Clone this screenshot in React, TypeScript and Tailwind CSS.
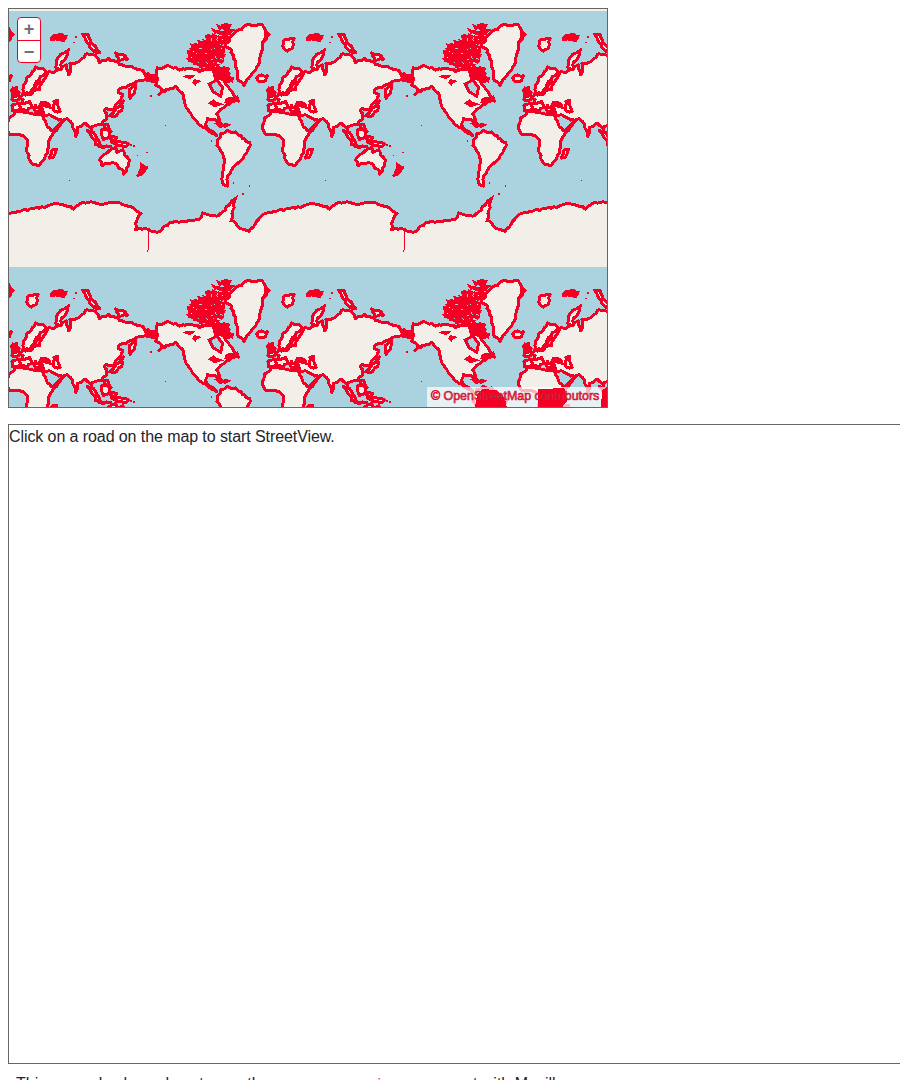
const RED = "#f50025";
const LAND = "#f2efe9";
const WATER = "#aad3df";

// coordinates are 3x screen pixels, one world is 768 wide
const landPaths = [
  // africa
  "19 385 28 355 48 338 75 335 100 342 128 345 136 365 148 385 161 392 189 362 164 395 150 410 144 425 146 448 135 468 124 490 109 498 94 492 86 465 80 440 84 425 74 407 50 404 29 405",
  // eurasia
  "36 332 35 316 50 311 62 312 72 300 60 290 68 283 85 285 102 275 116 268 124 250 136 232 148 216 165 214 180 205 197 196 208 222 214 200 207 190 235 186 250 172 262 160 284 165 300 186 322 178 345 182 365 195 385 203 410 205 430 210 440 238 410 246 388 256 365 266 352 278 366 285 362 302 340 325 312 328 322 352 306 372 285 376 272 385 255 370 235 382 228 406 216 372 204 356 190 364 160 351 150 342 132 346 125 325 105 322 85 318 68 320 55 335",
  // scandinavia
  "66 270 72 252 82 232 95 215 106 203 128 202 142 218 120 232 108 245 104 262 90 278 74 282",
  // kamchatka, japan
  "386 282 390 262 408 250 406 274 392 294",
  "330 346 345 332 358 320 368 302 364 330 346 348 332 350",
  // australia
  "300 478 312 465 330 452 345 442 352 455 368 448 385 478 386 498 372 520 362 508 345 490 325 488 305 497",
  // madagascar
  "160 446 167 450 160 472 150 476 152 460",
  // north america
  "470 206 500 198 530 206 558 210 576 204 600 214 625 206 655 222 668 232 690 268 716 302 692 306 670 322 650 342 654 352 660 375 648 358 622 354 618 375 630 392 650 408 625 392 602 378 578 350 558 322 552 286 526 260 500 268 476 282 488 265 470 255 472 236",
  // south america
  "652 420 662 402 682 394 705 398 722 408 754 434 745 452 722 482 695 508 685 530 680 558 668 554 668 520 672 480 668 462 652 435",
  // greenland
  "675 138 700 100 740 76 785 74 805 102 786 138 780 185 765 210 732 254 716 240 708 190 692 150",
  // iceland
  "772 232 786 224 802 230 796 241 778 242",
  // novaya zemlya and other russian islands
  "168 205 172 176 192 158 208 150 200 172 186 188 184 205",
  "250 104 266 102 270 122 285 140 300 160 285 155 258 128",
  "348 160 378 166 380 176 356 182",
  // uk, caspian
  "36 272 56 280 58 298 38 302",
  "160 304 172 304 178 332 164 336",
  // franz josef
  "850 120 882 116 880 138 862 156 852 144",
  // europe and med islands
  "60 312 88 308 96 322 80 332 64 328",
  "104 318 128 325 122 338 106 334",
  // indonesia
  "264 392 278 396 302 432 290 436",
  "304 392 326 384 332 412 310 422",
  "336 408 348 412 344 432 336 426",
  "350 424 386 430 376 440 352 436",
  "314 376 326 376 330 396 318 392",
  "292 434 330 440 300 442",
];

const blobs = [
  "155 110 178 100 200 106 190 120 156 120", // svalbard
  "27 95 38 104 27 116",
  "122 308 146 310 150 322 118 322",
  "410 530 425 495 438 505 426 522",
  "640 300 660 310 645 322 632 310",
  "652 370 686 376 660 382",
  "560 228 578 226 574 236",
  "578 245 596 242 584 254",
  "676 296 714 292 716 304 680 306",
  "438 220 470 230 470 245 440 240",
  "36 265 50 262 60 285 40 295",
];

const specks = [
  [450, 285], [494, 374], [632, 420], [410, 464], [438, 455], [206, 539], [746, 555], [727, 580], [226, 108], [220, 125], [390, 433], [400, 435], [698, 546],
];

// small deterministic random so the coast stays the same on every load
function makeRandom(seed: number) {
  let s = seed;
  return () => {
    s = (s * 16807) % 2147483647;
    return s / 2147483647;
  };
}

function roughen(points: string, amount: number, rand: () => number, closed = true) {
  const n = points.trim().split(/\s+/).map(Number);
  const out: string[] = [];
  const count = n.length / 2;
  const last = closed ? count : count - 1;
  for (let i = 0; i < last; i++) {
    const x1 = n[i * 2];
    const y1 = n[i * 2 + 1];
    const x2 = n[((i + 1) % count) * 2];
    const y2 = n[((i + 1) % count) * 2 + 1];
    const steps = Math.max(1, Math.round(Math.hypot(x2 - x1, y2 - y1) / 9));
    for (let k = 0; k < steps; k++) {
      const t = k / steps;
      out.push(`${x1 + (x2 - x1) * t + (rand() - 0.5) * amount} ${y1 + (y2 - y1) * t + (rand() - 0.5) * amount}`);
    }
  }
  if (!closed) out.push(`${n[n.length - 2]} ${n[n.length - 1]}`);
  return `M${out.join(" L")}${closed ? " Z" : ""}`;
}

const rand = makeRandom(4242);
const ANTARCTIC_COAST =
  "27 640 60 632 100 625 135 620 170 610 195 615 220 625 240 612 265 605 300 612 330 608 360 610 395 622 422 640 408 668 410 686 445 688 470 698 510 670 555 662 600 658 608 640 650 650 670 635 705 595 695 660 720 685 745 695 760 680 780 650 795 640";
const coast = roughen(ANTARCTIC_COAST, 5, rand, false);
const landD = landPaths.map((p) => roughen(p, 6, rand));
const blobD = blobs.map((p) => roughen(p, 7, rand));

// canadian archipelago: lots of tiny islands, almost solid red
const arcticRows = [
  [76, 655, 690],
  [92, 640, 690],
  [108, 620, 685],
  [122, 600, 675],
  [136, 575, 670],
  [150, 565, 665],
  [164, 565, 665],
  [178, 570, 660],
  [192, 595, 655],
  [206, 640, 680],
  [220, 645, 690],
  [234, 650, 690],
];
const arcticIslands: string[] = [];
for (const [y, from, to] of arcticRows) {
  for (let x = from; x < to; x += 12) {
    const w = 6 + rand() * 12;
    const h = 5 + rand() * 8;
    const px = x + rand() * 8 - 4;
    const py = y + rand() * 8 - 4;
    arcticIslands.push(`M${px} ${py} L${px + w} ${py + 3} L${px + w - 3} ${py + h} L${px + 2} ${py + h - 2} Z`);
  }
}

function World({ dx, dy }: { dx: number; dy: number }) {
  return (
    <g transform={`translate(${dx} ${dy})`}>
      {/* antarctica */}
      <path d={`${coast} L795 801 L27 801 Z`} fill={LAND} />
      <path d={coast} fill="none" stroke={RED} strokeWidth={9} />
      <path d="M445 688 L445 748 L442 756" fill="none" stroke={RED} strokeWidth={3} />
      {landD.map((d) => (
        <path key={d} d={d} fill={LAND} stroke={RED} strokeWidth={9} strokeLinejoin="round" />
      ))}
      {/* hudson bay */}
      <path d="M628 252 L650 240 L668 262 L662 288 L640 276 Z" fill={WATER} stroke={RED} strokeWidth={9} />
      <path d="M122 240 L100 268" fill="none" stroke={RED} strokeWidth={9} />
      {arcticIslands.map((d) => (
        <path key={d} d={d} fill={LAND} stroke={RED} strokeWidth={8} />
      ))}
      {blobD.map((d) => (
        <path key={d} d={d} fill={RED} stroke={RED} strokeWidth={6} />
      ))}
      {specks.map(([x, y]) => (
        <rect key={`${x}-${y}`} x={x} y={y} width={5} height={5} fill={RED} />
      ))}
    </g>
  );
}

export default function App() {
  return (
    <div className="h-[1080px] w-[900px] overflow-hidden bg-white font-['Liberation_Sans',Arial,sans-serif] text-base leading-6 text-[#212529]">
      <div className="p-2">
        <div className="relative h-[400px] w-[600px] overflow-hidden border border-[#666] bg-[#aad3df]">
          <svg className="block h-[398px] w-[598px]" viewBox="27 27 1794 1194" shapeRendering="crispEdges">
            {[-768, 0, 768, 1536].map((dx) =>
              [-768, 0, 768].map((dy) => <World key={`${dx}/${dy}`} dx={dx} dy={dy} />)
            )}
          </svg>

          {/* zoom buttons */}
          <div className="absolute left-2 top-2 flex h-[46px] w-6 flex-col overflow-hidden rounded border border-[#f50025] bg-white text-center font-bold text-[#707070]">
            <button className="h-[23px] border-b border-[#f50025] text-lg leading-[22px]">+</button>
            <button className="h-[23px] text-lg leading-[22px]">−</button>
          </div>

          {/* attribution */}
          <div className="absolute bottom-0 right-0 h-5 w-[180px] bg-white/70 pl-1 text-[12.4px] leading-[19px] whitespace-nowrap text-[#666] [-webkit-text-stroke:0.6px_#f50025]">
            <svg className="absolute bottom-0 left-[42px] h-5 w-[138px]" viewBox="0 0 139 20" shapeRendering="crispEdges">
              <path d="M6 20 L8 8 L14 2 L28 3 L36 11 L38 20 Z" fill="#f50025" />
              <path d="M69 20 L70 2 L96 1 L99 14 L94 20 Z" fill="#f50025" />
              <path d="M133 20 L134 3 L139 0 L139 20 Z" fill="#f50025" />
            </svg>
            <span className="relative">© OpenStreetMap contributors</span>
          </div>
        </div>

        <div className="mt-4 h-[640px] w-[1000px] border border-[#666] tracking-[-0.085px]">
          Click on a road on the map to start StreetView.
        </div>

        <p className="mt-2 pl-2">
          This example shows how to use the open source{" "}
          <code className="font-['Liberation_Mono',monospace] text-sm text-[#e83e8c]">viewer</code> concept with Mozilla
        </p>
      </div>
    </div>
  );
}
